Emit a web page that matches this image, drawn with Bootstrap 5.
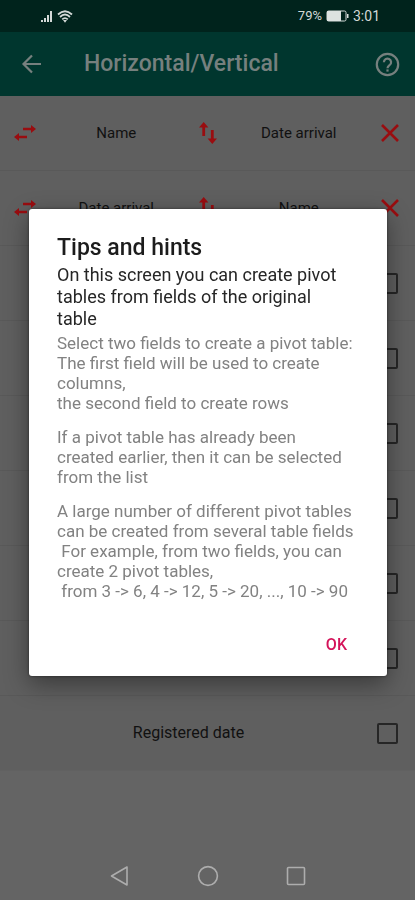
<!DOCTYPE html>
<html lang="en">
<head>
<meta charset="utf-8">
<meta name="viewport" content="width=device-width, initial-scale=1">
<title>Horizontal/Vertical</title>
<link href="https://cdn.jsdelivr.net/npm/bootstrap@5.3.0/dist/css/bootstrap.min.css" rel="stylesheet">
<style>
  body { font-family: Roboto, "Liberation Sans", sans-serif; background: #646464; color: #111; }
  button { font-family: inherit; }
  svg { display: block; }
  .status-bar { height: 32px; background: #00231c; color: #d3d9d7; font-size: 14px; padding: 0 35px 0 40px; }
  .battery-level { font-size: 13px; }
  .app-bar { height: 64px; background: #00362e; color: #76807e; padding: 0 15px 0 20px; gap: 40px; }
  .app-title { font-size: 23px; line-height: 32px; font-weight: 500; }
  .plain-btn { background: none; border: 0; padding: 0; color: inherit; }
  .field-row { height: 75px; background: #5f5f5f; border-bottom: 1px solid #595959; font-size: 16px; line-height: 20px; }
  .field-row:last-child { border-color: #616161; }
  .pair-row { font-size: 15px; }
  .icon-cell { width: 50px; color: #990d10; }
  .box-cell { width: 38px; }
  .field-check { appearance: none; width: 21px; height: 21px; margin: 0; border: 2px solid #262626; border-radius: 2px; background: transparent; }
  .system-nav { height: 48px; color: #adadad; }
  .nav-keys { gap: 40px; }
  .tips-layer { padding: 32px 0 48px; }
  .tips-layer .modal-dialog { max-width: 480px; min-height: 100%; margin: 0 28px 0 29px; }
  .tips-layer .modal-content { border: 0; border-radius: 3px; background: #fff; box-shadow: 0 8px 24px rgba(0,0,0,.4), 0 0 3px rgba(0,0,0,.5); }
  .tips-body { padding: 24px 31px 0 28px; font-size: 17px; line-height: 20px; color: #828282; }
  .tips-title { font-size: 23px; line-height: 29px; font-weight: 500; color: #1c1c1c; margin: 0 0 2px; }
  .tips-lead { font-size: 18px; line-height: 22px; color: #262626; margin: 0 0 3px; padding-right: 8px; }
  .tips-text { margin: 0 0 14px; }
  .tips-footer { padding: 12px 30px 13px; }
  .ok-btn { color: #d4145a; font-size: 16px; line-height: 20px; font-weight: 500; padding: 8px 10px; }
</style>
<script src="https://cdn.jsdelivr.net/npm/bootstrap@5.3.0/dist/js/bootstrap.bundle.min.js"></script>
</head>
<body>
<svg class="d-none" aria-hidden="true">
  <symbol id="swap-h" viewBox="0 0 22 16"><path d="M17 0l5 4-5 4zM5 8l-5 4 5 4z" fill="currentColor"/><path d="M9 4h9M13 12H4" stroke="currentColor" stroke-width="2.4"/></symbol>
  <symbol id="swap-v" viewBox="0 0 18 22"><path d="M0 5.5 4.7 0l4.7 5.5zM8.6 16.5l4.7 5.5 4.7-5.5z" fill="currentColor"/><path d="M4.7 4v10M13.3 18V8" stroke="currentColor" stroke-width="2.8"/></symbol>
  <symbol id="cross" viewBox="0 0 18 18"><path d="M1 1l16 16M17 1 1 17" stroke="currentColor" stroke-width="2.6"/></symbol>
</svg>

<div class="d-flex flex-column min-vh-100">
  <div class="status-bar d-flex align-items-center justify-content-between">
    <div class="d-flex gap-1">
      <svg width="13" height="13" viewBox="0 0 13 13" fill="currentColor" aria-hidden="true"><path d="M1 10h2v2H1zM4 8h2v4H4zM7 5h2v7H7zM10 1h2v11h-2z"/></svg>
      <svg width="16" height="13" viewBox="0 0 16 13" fill="none" stroke="currentColor" stroke-width="1.8" aria-hidden="true"><path d="M1 4.5Q8-2 15 4.5M3 7Q8 2 13 7M5.2 9.4Q8 6.8 10.8 9.4"/><path d="M6 10h4L8 12.8z" fill="currentColor" stroke="none"/></svg>
    </div>
    <div class="d-flex align-items-center gap-1">
      <span class="battery-level">79%</span>
      <svg width="23" height="12" viewBox="0 0 23 12" aria-hidden="true"><rect x="1" y="1" width="19" height="10" rx="1.5" fill="none" stroke="currentColor"/><path d="M1 1h14v10H1zM21 4h1.5v4H21z" fill="#dce2e0"/></svg>
      <span>3:01</span>
    </div>
  </div>

  <header class="app-bar d-flex align-items-center">
    <button type="button" class="plain-btn" aria-label="Back">
      <svg width="24" height="24" viewBox="0 0 24 24" fill="none" stroke="currentColor" stroke-width="2.2"><path d="M21 12H4M12 3.5 3.5 12l8.5 8.5"/></svg>
    </button>
    <h1 class="app-title flex-grow-1 mb-0">Horizontal/Vertical</h1>
    <button type="button" class="plain-btn" aria-label="Help">
      <svg width="25" height="25" viewBox="0 0 25 25" fill="none" stroke="currentColor" stroke-width="2.2"><circle cx="12.5" cy="12.5" r="10.7"/><path d="M8.9 10.2a3.6 3.6 0 1 1 5.8 2.8c-1.3 1-2.2 1.6-2.2 3.2" /><path d="M12.5 17.4v2.2"/></svg>
    </button>
  </header>

  <main class="flex-grow-1">
    <div class="field-row pair-row d-flex align-items-center text-center">
      <div class="icon-cell d-flex justify-content-center"><svg width="22" height="16"><use href="#swap-h"/></svg></div>
      <div class="col">Name</div>
      <div class="icon-cell d-flex justify-content-center"><svg width="18" height="22"><use href="#swap-v"/></svg></div>
      <div class="col">Date arrival</div>
      <button type="button" class="plain-btn icon-cell d-flex justify-content-center" aria-label="Remove"><svg width="18" height="18"><use href="#cross"/></svg></button>
    </div>
    <div class="field-row pair-row d-flex align-items-center text-center">
      <div class="icon-cell d-flex justify-content-center"><svg width="22" height="16"><use href="#swap-h"/></svg></div>
      <div class="col">Date arrival</div>
      <div class="icon-cell d-flex justify-content-center"><svg width="18" height="22"><use href="#swap-v"/></svg></div>
      <div class="col">Name</div>
      <button type="button" class="plain-btn icon-cell d-flex justify-content-center" aria-label="Remove"><svg width="18" height="18"><use href="#cross"/></svg></button>
    </div>
    <div class="field-row d-flex align-items-center justify-content-end"><div class="box-cell"><input class="field-check d-block" type="checkbox" aria-label="Field 1"></div></div>
    <div class="field-row d-flex align-items-center justify-content-end"><div class="box-cell"><input class="field-check d-block" type="checkbox" aria-label="Field 2"></div></div>
    <div class="field-row d-flex align-items-center justify-content-end"><div class="box-cell"><input class="field-check d-block" type="checkbox" aria-label="Field 3"></div></div>
    <div class="field-row d-flex align-items-center justify-content-end"><div class="box-cell"><input class="field-check d-block" type="checkbox" aria-label="Field 4"></div></div>
    <div class="field-row d-flex align-items-center justify-content-end"><div class="box-cell"><input class="field-check d-block" type="checkbox" aria-label="Field 5"></div></div>
    <div class="field-row d-flex align-items-center justify-content-end"><div class="box-cell"><input class="field-check d-block" type="checkbox" aria-label="Field 6"></div></div>
    <div class="field-row d-flex align-items-center"><label class="flex-grow-1 text-center" for="registered">Registered date</label><div class="box-cell"><input class="field-check d-block" type="checkbox" id="registered"></div></div>
  </main>

  <nav class="system-nav d-flex align-items-center justify-content-center" aria-label="System">
    <div class="nav-keys d-flex align-items-center">
      <button type="button" class="plain-btn px-3" aria-label="Back"><svg width="24" height="22" viewBox="0 0 24 22" fill="none" stroke="currentColor" stroke-width="1.6" stroke-linejoin="round"><path d="M19 2v18L3.5 11z"/></svg></button>
      <button type="button" class="plain-btn px-2" aria-label="Home"><svg width="24" height="22" viewBox="0 0 24 22" fill="none" stroke="currentColor" stroke-width="1.6"><circle cx="12" cy="11" r="9.4"/></svg></button>
      <button type="button" class="plain-btn px-3" aria-label="Recent"><svg width="24" height="22" viewBox="0 0 24 22" fill="none" stroke="currentColor" stroke-width="1.6"><rect x="3.5" y="2.5" width="17" height="17" rx="1"/></svg></button>
    </div>
  </nav>
</div>

<div class="modal tips-layer d-block" role="dialog" aria-modal="true" aria-labelledby="tips-title">
  <div class="modal-dialog modal-dialog-centered">
    <div class="modal-content">
      <div class="tips-body">
        <h2 class="tips-title" id="tips-title">Tips and hints</h2>
        <p class="tips-lead">On this screen you can create pivot tables from fields of the original table</p>
        <p class="tips-text">Select two fields to create a pivot table:<br>The first field will be used to create columns,<br>the second field to create rows</p>
        <p class="tips-text">If a pivot table has already been created earlier, then it can be selected from the list</p>
        <p class="tips-text">A large number of different pivot tables can be created from several table fields<br>&nbsp;For example, from two fields, you can create 2 pivot tables,<br>&nbsp;from 3 -&gt; 6, 4 -&gt; 12, 5 -&gt; 20, ..., 10 -&gt; 90</p>
      </div>
      <div class="tips-footer d-flex justify-content-end">
        <button type="button" class="plain-btn ok-btn">OK</button>
      </div>
    </div>
  </div>
</div>
</body>
</html>
